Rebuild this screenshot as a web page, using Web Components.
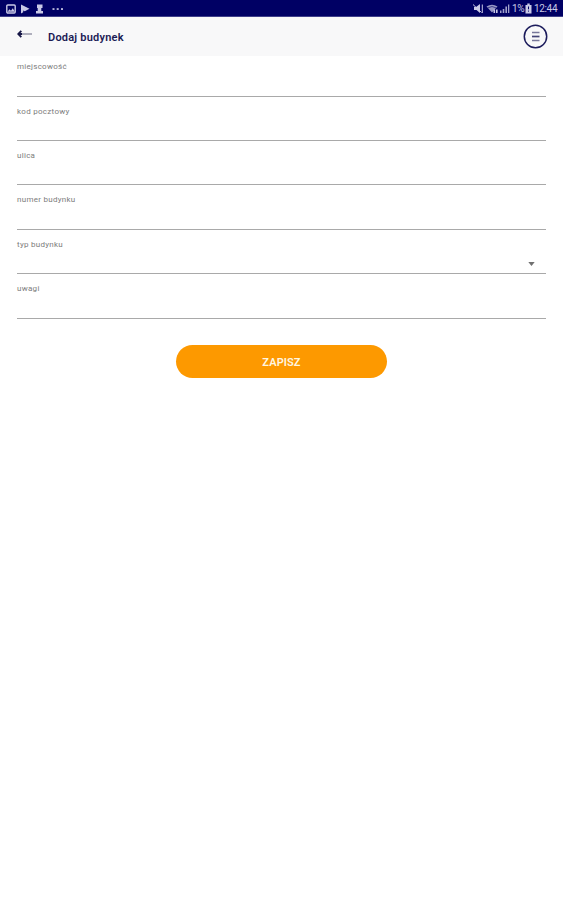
<!DOCTYPE html>
<html lang="pl">
<head>
<meta charset="utf-8">
<title>Dodaj budynek</title>
<style>
  body {
    margin: 0;
    background: #fff;
    font-family: Roboto, "Liberation Sans", sans-serif;
  }
</style>
</head>
<body>
<status-bar time="12:44" battery="1%"></status-bar>
<app-header>Dodaj budynek</app-header>
<building-form>
  <form-field label="miejscowość"></form-field>
  <form-field label="kod pocztowy"></form-field>
  <form-field label="ulica"></form-field>
  <form-field label="numer budynku"></form-field>
  <form-field label="typ budynku" select></form-field>
  <form-field label="uwagi"></form-field>
  <save-button slot="action">ZAPISZ</save-button>
</building-form>

<script>
class StatusBar extends HTMLElement {
  constructor() {
    super();
    this.attachShadow({ mode: "open" });
    this.shadowRoot.innerHTML = `
      <style>
        :host {
          display: flex;
          justify-content: space-between;
          height: 17px;
          padding: 0 5px 0 6px;
          box-sizing: border-box;
          background: #000064;
          border-bottom: 1px solid #40408a;
          color: #c9c9e6;
          font-size: 10px;
          line-height: 16px;
        }
        div { display: flex; align-items: center; }
        span { padding-top: 2px; }
        svg { display: block; margin-top: 2px; }
        #battery { width: 12px; letter-spacing: -.4px; }
        #time { width: 24px; letter-spacing: -.35px; white-space: nowrap; }
      </style>
      <div>
        <svg width="60" height="14" viewBox="0 0 60 14" fill="#c9c9e6">
          <rect x=".8" y="3" width="8.4" height="8" rx="1" fill="none" stroke="#c9c9e6" stroke-width="1.4"/>
          <path d="M1.5 9.800l2-2.500 1.500 1.500 1.800-2.600 2 3.600z"/>
          <path d="M15 2.500v9l2.200-1.300V8.400l1.600.9 4.700-2.500z"/>
          <path d="M31 2.500h5.500v3.500h-1.200v3h1.700v2.500h-7V9h1.700V6H31z"/>
          <rect x="46.500" y="6.200" width="2" height="1.700"/>
          <rect x="50.700" y="6.200" width="2" height="1.700"/>
          <rect x="55" y="6.200" width="2" height="1.700"/>
        </svg>
      </div>
      <div>
        <svg width="39" height="14" viewBox="0 0 39 14" fill="#c9c9e6">
          <path d="M1 5h2l4-3v9L3.500 8H1z"/>
          <path d="M0 2.500l8.500 8M9.300 2.500v8.500" stroke="#c9c9e6" fill="none"/>
          <path d="M13.500 4.500q5.500-3.500 11 0L19 10.500z" opacity=".75"/>
          <path d="M14.500 6q4.500-3 9 0" stroke="#000064" stroke-width=".6" fill="none"/>
          <path d="M20.500 7.500h1.600V11h-1.600zM23 7.500h1.600V11H23z"/>
          <path d="M27 8.500h1.500V11H27zM29.700 7h1.600v4h-1.600zM32.400 4.500H34V11h-1.600zM35 2.500h1.300V11H35z" opacity=".8"/>
        </svg>
        <span id="battery"></span>
        <svg width="10" height="14" viewBox="0 0 10 14">
          <path d="M3.300 1.500h2.400V3H7.500v8.500h-6V3h1.800z" fill="#c9c9e6"/>
          <path d="M4.500 4.500v2.800M4.500 8.600v1" stroke="#000064"/>
        </svg>
        <span id="time"></span>
      </div>
    `;
    this.shadowRoot.querySelector("#battery").textContent = this.getAttribute("battery");
    this.shadowRoot.querySelector("#time").textContent = this.getAttribute("time");
  }
}

class AppHeader extends HTMLElement {
  constructor() {
    super();
    this.attachShadow({ mode: "open" });
    this.shadowRoot.innerHTML = `
      <style>
        :host {
          display: flex;
          align-items: center;
          height: 39px;
          padding: 0 15px 0 17px;
          box-sizing: border-box;
          background: #f8f8f9;
          color: #1b1b55;
        }
        .back { margin: 0 15px 6px 0; }
        h1 {
          flex: 1;
          margin: 0 0 -2px;
          font-size: 11px;
          font-weight: 600;
          letter-spacing: .22px;
          line-height: 16px;
        }
        svg { display: block; flex: none; }
      </style>
      <svg class="back" width="16" height="10" viewBox="0 0 16 10" fill="none">
        <path d="M5 5h10" stroke="#9c9cae" stroke-width="1.600"/>
        <path d="M4.300 1.800L1.200 5l3.100 3.200M1.500 5H5" stroke="#171747" stroke-width="1.800"/>
      </svg>
      <h1><slot></slot></h1>
      <svg width="25" height="25" viewBox="0 0 25 25" fill="none">
        <circle cx="12.500" cy="12.500" r="11.200" stroke="#1c1c5c" stroke-width="1.500"/>
        <path d="M9 8.500h7.500M9 16.500h7.500" stroke="#77779a" stroke-width="1.700"/>
        <path d="M9 12.500h7.500" stroke="#444476" stroke-width="1.700"/>
      </svg>
    `;
  }
}

class BuildingForm extends HTMLElement {
  constructor() {
    super();
    this.attachShadow({ mode: "open" });
    this.shadowRoot.innerHTML = `
      <style>
        :host { display: block; padding: 0 17px; }
        .fields { display: flex; flex-direction: column; }
        .action { display: flex; justify-content: center; margin-top: 26.400px; }
      </style>
      <div class="fields"><slot></slot></div>
      <div class="action"><slot name="action"></slot></div>
    `;
  }
}

class FormField extends HTMLElement {
  constructor() {
    super();
    this.attachShadow({ mode: "open" });
    this.shadowRoot.innerHTML = `
      <style>
        :host {
          display: flex;
          flex-direction: column;
          height: 44.400px;
          box-sizing: border-box;
          border-bottom: 1px solid #a9a9a9;
        }
        :host(:first-child) { height: 40.600px; }
        :host(:first-child) label { padding-top: 4px; }
        label {
          padding-top: 8px;
          color: #7c7c7c;
          font-size: 8px;
          line-height: 13px;
          letter-spacing: .28px;
        }
        .value { display: flex; flex: 1; align-items: center; justify-content: flex-end; }
        svg { display: none; margin: 4px 11px 0 0; }
        :host([select]) svg { display: block; }
      </style>
      <label></label>
      <div class="value">
        <svg width="7" height="4" viewBox="0 0 7 4"><path d="M.3 0h6.400L3.500 4z" fill="#707070"/></svg>
      </div>
    `;
    this.shadowRoot.querySelector("label").textContent = this.getAttribute("label");
  }
}

class SaveButton extends HTMLElement {
  constructor() {
    super();
    this.attachShadow({ mode: "open" });
    this.shadowRoot.innerHTML = `
      <style>
        button {
          display: block;
          width: 211px;
          height: 33px;
          padding: 2px 0 0;
          border: none;
          border-radius: 17px;
          background: #fd9900;
          color: #fff6e0;
          font: 600 11px Roboto, "Liberation Sans", sans-serif;
          letter-spacing: .1px;
          cursor: pointer;
        }
      </style>
      <button><slot></slot></button>
    `;
  }
}

customElements.define("status-bar", StatusBar);
customElements.define("app-header", AppHeader);
customElements.define("building-form", BuildingForm);
customElements.define("form-field", FormField);
customElements.define("save-button", SaveButton);
</script>
</body>
</html>
